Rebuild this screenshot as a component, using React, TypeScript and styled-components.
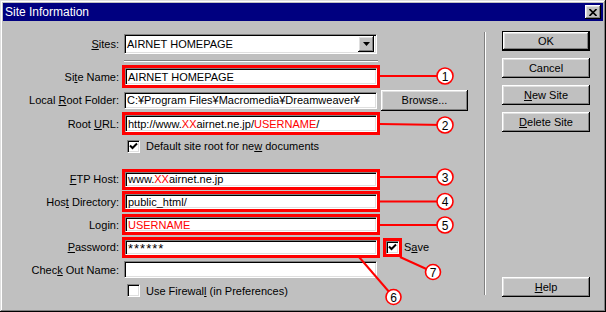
import React from "react";
import styled, { createGlobalStyle, css } from "styled-components";

const GlobalStyle = createGlobalStyle`
  html, body { margin: 0; padding: 0; background: #c0c0c0; }
  body {
    font-family: "Liberation Sans", Arial, sans-serif;
    font-size: 11px;
    color: #000;
  }
`;

const raised = css`
  background: #c0c0c0;
  box-shadow: inset -1px -1px #000, inset 1px 1px #fff, inset -2px -2px #808080,
    inset 2px 2px #dfdfdf;
`;

const sunken = css`
  background: #fff;
  border: 1px solid;
  border-color: #808080 #fff #fff #808080;
  box-shadow: inset 1px 1px #000, inset -1px -1px #dfdfdf;
`;

const Window = styled.div`
  position: relative;
  width: 606px;
  height: 312px;
  box-sizing: border-box;
  padding: 3px 3px 2px;
  display: flex;
  flex-direction: column;
  overflow: hidden;
  background: #c0c0c0;
  box-shadow: inset -1px -1px #000, inset 1px 1px #dfdfdf, inset -2px -2px #808080,
    inset 2px 2px #fff;
`;

const TitleBar = styled.div`
  height: 18px;
  flex-shrink: 0;
  background: #000080;
  display: flex;
  align-items: center;
  justify-content: space-between;
  padding: 0 2px 0 2px;
`;

const Title = styled.span`
  color: #fff;
  font-size: 12px;
`;

const CloseBtn = styled.div`
  ${raised};
  width: 16px;
  height: 14px;
  display: flex;
  align-items: center;
  justify-content: center;
`;

const Body = styled.div`
  flex: 1;
  display: flex;
`;

const Form = styled.div`
  width: 481px;
  padding-top: 12px;
  display: flex;
  flex-direction: column;
`;

const Row = styled.div<{ $h: number; $mt?: number }>`
  height: ${(p) => p.$h}px;
  margin-top: ${(p) => p.$mt ?? 0}px;
  display: flex;
  align-items: center;
`;

const Label = styled.div`
  width: 116px;
  flex-shrink: 0;
  text-align: right;
  margin-right: 3px;
  white-space: nowrap;
`;

const Separator = styled.div`
  margin: 6px 0 3px 121px;
  width: 254px;
  height: 0;
  border-top: 1px solid #808080;
  border-bottom: 1px solid #fff;
`;

const TextBox = styled.div<{ $w?: number; $h?: number; $inner?: boolean }>`
  ${sunken};
  box-sizing: border-box;
  width: ${(p) => p.$w ?? 253}px;
  height: ${(p) => p.$h ?? 17}px;
  margin-left: ${(p) => (p.$inner ? 0 : 2)}px;
  padding: 0 2px;
  display: flex;
  align-items: center;
  white-space: nowrap;
  overflow: hidden;
`;

const Marker = styled.div<{ $h: number }>`
  box-sizing: border-box;
  width: 258px;
  height: ${(p) => p.$h}px;
  border: 3px solid #f00;
  display: flex;
`;

const Red = styled.span`
  color: #f00;
`;

const Stars = styled.span`
  font-size: 13px;
  letter-spacing: 1px;
  line-height: 1;
  padding-top: 3px;
`;

const Combo = styled(TextBox)`
  justify-content: space-between;
`;

const DropBtn = styled.div`
  ${raised};
  width: 16px;
  height: 16px;
  display: flex;
  align-items: center;
  justify-content: center;
`;

const Button = styled.div<{ $default?: boolean; $w?: number }>`
  ${raised};
  box-sizing: border-box;
  width: ${(p) => p.$w ?? 88}px;
  height: 20px;
  display: flex;
  align-items: center;
  justify-content: center;
  white-space: nowrap;
  ${(p) =>
    p.$default &&
    css`
      border: 1px solid #000;
    `}
`;

const BrowseBtn = styled(Button)`
  height: 21px;
  margin-left: 4px;
`;

const CheckRow = styled.div`
  display: flex;
  align-items: center;
  margin-left: 5px;
  gap: 6px;
`;

const CheckBox = styled.div`
  ${sunken};
  box-sizing: border-box;
  width: 13px;
  height: 13px;
  display: flex;
  align-items: center;
  justify-content: center;
`;

const SaveMark = styled.div`
  box-sizing: border-box;
  width: 19px;
  height: 19px;
  border: 3px solid #f00;
  margin-left: 3px;
`;

const SaveText = styled.span`
  margin-left: 2px;
`;

const VSep = styled.div`
  margin-top: 11px;
  height: 263px;
  width: 0;
  border-left: 1px solid #808080;
  border-right: 1px solid #fff;
`;

const ButtonCol = styled.div`
  margin-left: 16px;
  padding: 10px 0 13px;
  display: flex;
  flex-direction: column;
  gap: 7px;
`;

const HelpBtn = styled(Button)`
  margin-top: auto;
`;

const Callouts = styled.svg`
  position: absolute;
  left: 0;
  top: 0;
  pointer-events: none;
`;

const Check = () => (
  <svg width="9" height="9" viewBox="0 0 9 9">
    <path d="M1 3.5 L3.5 6 L8 1.5" fill="none" stroke="#000" strokeWidth="2" />
  </svg>
);

const callouts = [
  { n: 1, x: 445, y: 76, r: 8, from: [380, 76] },
  { n: 2, x: 445, y: 125, r: 8, from: [380, 124] },
  { n: 3, x: 445, y: 177, r: 8, from: [380, 177] },
  { n: 4, x: 445, y: 201.5, r: 8, from: [380, 201.5] },
  { n: 5, x: 445, y: 225, r: 8, from: [380, 225] },
  { n: 6, x: 393.5, y: 297, r: 7.5, from: [359, 257] },
  { n: 7, x: 433, y: 272, r: 7.5, from: [400, 257] },
];

export default function App() {
  return (
    <>
      <GlobalStyle />
      <Window>
        <TitleBar>
          <Title>Site Information</Title>
          <CloseBtn>
            <svg width="8" height="7" viewBox="0 0 8 7">
              <path d="M0.5 0 L7.5 7 M7.5 0 L0.5 7" stroke="#000" strokeWidth="1.6" />
            </svg>
          </CloseBtn>
        </TitleBar>
        <Body>
          <Form>
            <Row $h={21}>
              <Label>
                <u>S</u>ites:
              </Label>
              <Combo $w={253} $h={20}>
                <span>AIRNET HOMEPAGE</span>
                <DropBtn>
                  <svg width="7" height="4" viewBox="0 0 7 4">
                    <path d="M0 0 H7 L3.5 4 Z" fill="#000" />
                  </svg>
                </DropBtn>
              </Combo>
            </Row>
            <Separator />
            <Row $h={23}>
              <Label>
                Si<u>t</u>e Name:
              </Label>
              <Marker $h={23}>
                <TextBox $inner $w={252} $h={17}>
                  AIRNET HOMEPAGE
                </TextBox>
              </Marker>
            </Row>
            <Row $h={24}>
              <Label>
                Local <u>R</u>oot Folder:
              </Label>
              <TextBox>C:¥Program Files¥Macromedia¥Dreamweaver¥</TextBox>
              <BrowseBtn $w={87}>Browse...</BrowseBtn>
            </Row>
            <Row $h={23}>
              <Label>
                Root <u>U</u>RL:
              </Label>
              <Marker $h={23}>
                <TextBox $inner $w={252} $h={17}>
                  http://www.<Red>XX</Red>airnet.ne.jp/<Red>USERNAME</Red>/
                </TextBox>
              </Marker>
            </Row>
            <Row $h={22}>
              <Label />
              <CheckRow>
                <CheckBox>
                  <Check />
                </CheckBox>
                <span>
                  Default site root for ne<u>w</u> documents
                </span>
              </CheckRow>
            </Row>
            <Row $h={22} $mt={11}>
              <Label>
                <u>F</u>TP Host:
              </Label>
              <Marker $h={21}>
                <TextBox $inner $w={252} $h={15}>
                  www.<Red>XX</Red>airnet.ne.jp
                </TextBox>
              </Marker>
            </Row>
            <Row $h={23}>
              <Label>
                Hos<u>t</u> Directory:
              </Label>
              <Marker $h={21}>
                <TextBox $inner $w={252} $h={15}>
                  public_html/
                </TextBox>
              </Marker>
            </Row>
            <Row $h={23}>
              <Label>
                Lo<u>g</u>in:
              </Label>
              <Marker $h={21}>
                <TextBox $inner $w={252} $h={15}>
                  <Red>USERNAME</Red>
                </TextBox>
              </Marker>
            </Row>
            <Row $h={22}>
              <Label>
                <u>P</u>assword:
              </Label>
              <Marker $h={21}>
                <TextBox $inner $w={252} $h={15}>
                  <Stars>******</Stars>
                </TextBox>
              </Marker>
              <SaveMark>
                <CheckBox>
                  <Check />
                </CheckBox>
              </SaveMark>
              <SaveText>
                S<u>a</u>ve
              </SaveText>
            </Row>
            <Row $h={23}>
              <Label>
                Chec<u>k</u> Out Name:
              </Label>
              <TextBox />
            </Row>
            <Row $h={19}>
              <Label />
              <CheckRow>
                <CheckBox />
                <span>
                  Use Firewal<u>l</u> (in Preferences)
                </span>
              </CheckRow>
            </Row>
          </Form>
          <VSep />
          <ButtonCol>
            <Button $default>OK</Button>
            <Button>Cancel</Button>
            <Button>
              <u>N</u>ew Site
            </Button>
            <Button>
              <u>D</u>elete Site
            </Button>
            <HelpBtn>
              <u>H</u>elp
            </HelpBtn>
          </ButtonCol>
        </Body>
        <Callouts width="606" height="312" viewBox="0 0 606 312">
          {callouts.map((c) => (
            <g key={c.n}>
              <line x1={c.from[0]} y1={c.from[1]} x2={c.x} y2={c.y} stroke="#f00" strokeWidth="2" />
              <circle cx={c.x} cy={c.y} r={c.r} fill="#fff" stroke="#f00" strokeWidth="1.6" />
              <text
                x={c.x}
                y={c.y + 4.5}
                textAnchor="middle"
                fontSize="12"
                fontFamily="'Liberation Sans', Arial, sans-serif"
                fill="#000"
              >
                {c.n}
              </text>
            </g>
          ))}
        </Callouts>
      </Window>
    </>
  );
}
